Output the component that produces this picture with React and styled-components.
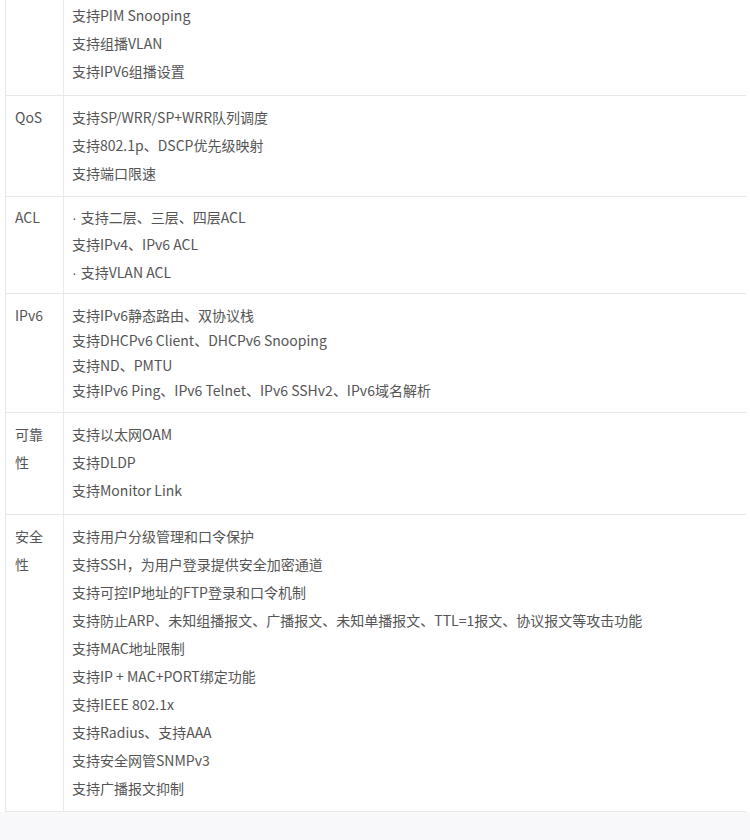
import React from "react";
import styled, { createGlobalStyle } from "styled-components";

const GlobalStyle = createGlobalStyle`
  html, body {
    margin: 0;
    padding: 0;
    background: #ffffff;
  }
  body {
    font-family: "Noto Sans CJK SC", "Liberation Sans", sans-serif;
    color: #555555;
  }
`;

const Page = styled.div`
  width: 750px;
  display: flex;
  flex-direction: column;
`;

const Table = styled.div`
  margin-left: 5px;
  width: 740px;
  border-left: 1px solid #e8e8e8;
  display: flex;
  flex-direction: column;
`;

const Row = styled.div`
  display: grid;
  grid-template-columns: 58px 1fr;
  border-bottom: 1px solid #e8e8e8;
`;

const Label = styled.div`
  border-right: 1px solid #ebebeb;
  padding: ${(p) => p.$top}px 12px ${(p) => p.$bottom}px 9px;
  font-size: 14px;
  line-height: ${(p) => p.$lh}px;
  color: #555555;
`;

const Body = styled.div`
  padding: ${(p) => p.$top}px 8px ${(p) => p.$bottom}px 8px;
  display: flex;
  flex-direction: column;
`;

const Line = styled.div`
  font-size: 14px;
  height: ${(p) => p.$h}px;
  line-height: ${(p) => p.$h}px;
  white-space: nowrap;
  color: #555555;
`;

const Dot = styled.span`
  font-family: "Liberation Sans", sans-serif;
  margin-right: 4px;
`;

const Footer = styled.div`
  height: 30px;
  background: #f8f8fa;
`;

const rows = [
  {
    label: "",
    top: 1,
    bottom: 10,
    lines: [
      ["支持PIM Snooping", 28],
      ["支持组播VLAN", 28],
      ["支持IPV6组播设置", 28],
    ],
  },
  {
    label: "QoS",
    top: 7,
    bottom: 9,
    lines: [
      ["支持SP/WRR/SP+WRR队列调度", 28],
      ["支持802.1p、DSCP优先级映射", 28],
      ["支持端口限速", 28],
    ],
  },
  {
    label: "ACL",
    top: 7,
    bottom: 7,
    lines: [
      ["支持二层、三层、四层ACL", 26, true],
      ["支持IPv4、IPv6 ACL", 28],
      ["支持VLAN ACL", 28, true],
    ],
  },
  {
    label: "IPv6",
    top: 9,
    bottom: 9,
    lines: [
      ["支持IPv6静态路由、双协议栈", 25],
      ["支持DHCPv6 Client、DHCPv6 Snooping", 25],
      ["支持ND、PMTU", 25],
      ["支持IPv6 Ping、IPv6 Telnet、IPv6 SSHv2、IPv6域名解析", 25],
    ],
  },
  {
    label: "可靠性",
    top: 7,
    bottom: 10,
    lines: [
      ["支持以太网OAM", 28],
      ["支持DLDP", 28],
      ["支持Monitor Link", 28],
    ],
  },
  {
    label: "安全性",
    top: 7,
    bottom: 9,
    lines: [
      ["支持用户分级管理和口令保护", 28],
      ["支持SSH，为用户登录提供安全加密通道", 28],
      ["支持可控IP地址的FTP登录和口令机制", 28],
      ["支持防止ARP、未知组播报文、广播报文、未知单播报文、TTL=1报文、协议报文等攻击功能", 28],
      ["支持MAC地址限制", 28],
      ["支持IP + MAC+PORT绑定功能", 28],
      ["支持IEEE 802.1x", 28],
      ["支持Radius、支持AAA", 28],
      ["支持安全网管SNMPv3", 28],
      ["支持广播报文抑制", 28],
    ],
  },
];

export default function App() {
  return (
    <>
      <GlobalStyle />
      <Page>
        <Table>
          {rows.map((row, i) => (
            <Row key={i}>
              <Label $top={row.top} $bottom={row.bottom} $lh={row.lines[0][1]}>
                {row.label}
              </Label>
              <Body $top={row.top} $bottom={row.bottom}>
                {row.lines.map(([text, h, bullet], j) => (
                  <Line key={j} $h={h}>
                    {bullet && <Dot>·</Dot>}
                    {text}
                  </Line>
                ))}
              </Body>
            </Row>
          ))}
        </Table>
        <Footer />
      </Page>
    </>
  );
}
